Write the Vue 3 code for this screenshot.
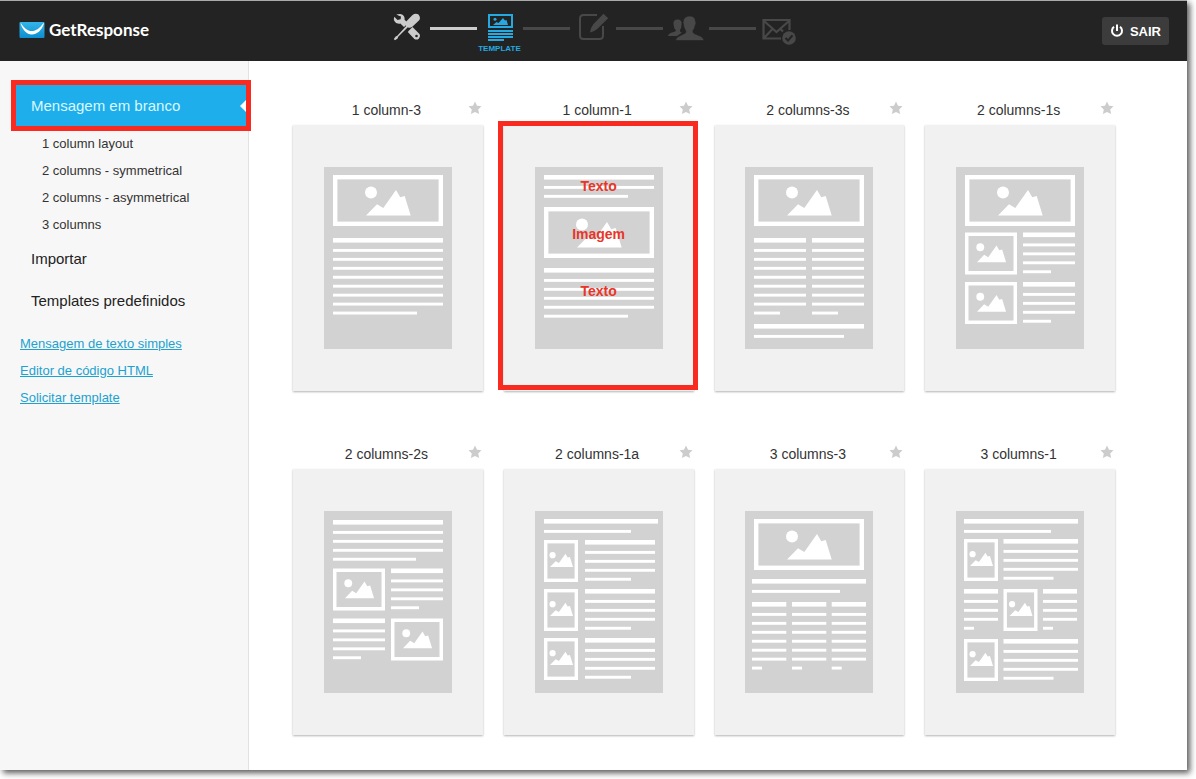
<script setup>
import { ref } from 'vue'

const img = (x, y, w, h, size) => ({ kind: 'image', x, y, w, h, size })
const text = (x, y, w, rows, last) => ({ kind: 'text', x, y, w, rows, last })

/* Drawings are laid out on a 128 x 182 sheet. */
const templates = [
  { name: '1 column-3', blocks: [img(9, 8, 110, 51, 'l'), text(9, 71, 110, 8, 84)] },
  {
    name: '1 column-1',
    marked: true,
    notes: ['Texto', 'Imagem', 'Texto'],
    blocks: [text(9, 8, 110, 2, 84), img(9, 40, 110, 51, 'l'), text(9, 101, 110, 5, 84)],
  },
  {
    name: '2 columns-3s',
    blocks: [img(9, 8, 110, 51, 'l'), text(9, 71, 52, 8, 26), text(67, 71, 52, 8, 26), text(9, 157, 110, 1, 90)],
  },
  {
    name: '2 columns-1s',
    blocks: [
      img(9, 8, 110, 51, 'l'),
      img(9, 65.5, 52, 42, 'm'), text(67, 65.5, 52, 4, 28),
      img(9, 115, 52, 42, 'm'), text(67, 115, 52, 4, 28),
    ],
  },
  {
    name: '2 columns-2s',
    blocks: [
      text(9, 9, 110, 4, 83),
      img(9, 57.5, 52, 42, 'm'), text(67, 57.5, 52, 4, 28),
      text(9, 107.5, 52, 4, 28), img(67, 107.5, 52, 42, 'm'),
    ],
  },
  {
    name: '2 columns-1a',
    blocks: [
      text(9, 8, 114, 1, 87),
      img(9, 29, 34, 42, 's'), text(50, 29, 70, 4, 46),
      img(9, 78, 34, 42, 's'), text(50, 78, 70, 4, 46),
      img(9, 127, 34, 42, 's'), text(50, 127, 70, 4, 46),
    ],
  },
  {
    name: '3 columns-3',
    blocks: [
      img(9, 8, 110, 51, 'l'), text(7, 68, 114, 1, 88),
      text(7, 91, 34.3, 7, 10), text(47, 91, 34.3, 7, 10), text(86.7, 91, 34.3, 7, 10),
    ],
  },
  {
    name: '3 columns-1',
    blocks: [
      text(8, 8, 114, 1, 87),
      img(8, 28, 34, 42, 's'), text(47.5, 28, 74.5, 4, 50),
      text(8, 78, 34, 4, 10), img(47.5, 78, 34, 42, 's'), text(87, 78, 34, 4, 10),
      img(8, 128, 34, 42, 's'), text(47.5, 128, 74.5, 4, 50),
    ],
  },
]

const scenes = {
  l: { x: 33, y: 40.5, scale: 1, border: 4.4 },
  m: { x: 12, y: 29.7, scale: 0.65, border: 3.5 },
  s: { x: 6, y: 27, scale: 0.515, border: 3.4 },
}
const scene = (b) => {
  const s = scenes[b.size]
  return `translate(${b.x + s.x} ${b.y + s.y}) scale(${s.scale})`
}
const border = (b) => scenes[b.size].border

const layouts = ['1 column layout', '2 columns - symmetrical', '2 columns - asymmetrical', '3 columns']
const tools = ['Mensagem de texto simples', 'Editor de código HTML', 'Solicitar template']
const favourites = ref([])
const toggle = (name) => {
  const i = favourites.value.indexOf(name)
  if (i < 0) favourites.value.push(name)
  else favourites.value.splice(i, 1)
}
</script>

<template>
  <div class="app">
    <header class="topbar">
      <a class="logo" href="#">
        <svg width="26" height="18" viewBox="0 0 26 18" aria-hidden="true">
          <defs>
            <linearGradient id="mail" x1="0" y1="0" x2="0" y2="1">
              <stop offset="0" stop-color="#35b5e9" />
              <stop offset="1" stop-color="#0c8ed0" />
            </linearGradient>
          </defs>
          <rect x=".5" y="1" width="25" height="16" rx="1" fill="url(#mail)" />
          <path d="M2 2.200C5 7 8.500 10 12.800 10S21 7 24.200 2.200L25 2.500C22.500 9.500 18 13.500 12.800 13.500S4 9.500 1.700 2.800Z" fill="#fff" />
        </svg>
        <span>GetResponse</span>
      </a>

      <ol class="steps">
        <li class="step done">
          <svg width="28" height="28" viewBox="0 0 28 28" fill="currentColor" aria-hidden="true">
            <path d="M3.300 1.600 7 1C10 1.200 12 3.500 11.600 6.800L15 10.200 11 14 7.300 10.500C4 11.400 1 9 .800 6L1.300 3.800 4.500 7 7.600 6.300 8 3.600 5.900 2.700Z" />
            <path d="M16 17.500 19.500 14 26.500 20.900Q28 23 26 25.400Q23.800 27.500 21.400 25.900L14.800 19Z" />
            <circle cx="23.500" cy="23" r="1.300" fill="#232323" />
            <path d="M19.500 2Q22.500 -.3 25.500 1.500Q28 4.500 26.200 7.200L19 14Q16.500 15.500 14.800 14.200L5.200 23.700 4.600 25.400 2 27.300.8 26.100 2.700 23.400 4.300 22.700 13.200 13Q11.800 11 13.200 8.500Z" />
          </svg>
        </li>
        <li class="line done"></li>
        <li class="step current">
          <svg width="28" height="28" viewBox="0 0 28 28" fill="currentColor" aria-hidden="true">
            <path fill-rule="evenodd" d="M2 1h25v14H2ZM4 3v10h21V3Z" />
            <circle cx="9" cy="6.300" r="1.500" />
            <path d="M7 12 10.500 9 12.500 10 17 5 19 7.500 20.500 7 22 12Z" />
            <path d="M2 17h25v2H2ZM2 20h25v2H2ZM2 23h25v2H2ZM2 26h16v2H2Z" />
          </svg>
          <span class="step-label">TEMPLATE</span>
        </li>
        <li class="line"></li>
        <li class="step">
          <svg width="32" height="28" viewBox="0 0 32 28" aria-hidden="true">
            <path d="M20 2H6.500Q3 2 3 5.500V22.500Q3 26 6.500 26H22.500Q26 26 26 22.500V13" fill="none" stroke="currentColor" stroke-width="2" />
            <path d="M26.500.800 31.200 5.300 20.500 15.700Q17.500 18.500 13 19.500Q13.500 14.500 16.500 11Z" fill="currentColor" />
          </svg>
        </li>
        <li class="line"></li>
        <li class="step">
          <svg width="36" height="28" viewBox="0 0 36 28" fill="currentColor" aria-hidden="true">
            <path d="M0 23Q.5 20.500 4 19.500Q8 18.500 8 17.500Q5.500 15 5.500 11Q5 6.500 9.500 6.500Q14.500 6.500 13.500 12Q13.500 15 12 17Q11.500 19 14 19.500L9 23Z" />
            <path d="M7.500 27.500Q8 24 12.500 22.500L17.500 20Q18.500 18.500 17 16.500Q15.500 14 15.500 11.500L15 9.500 15.700 6.500Q17 3 21.500 3Q27 3 27.300 7.500L28 10 27 13Q26.500 16 25 17.500Q24.500 19.500 26 20.500L32 23Q35.500 24.500 36 27.500Z" stroke="#232323" stroke-width=".6" />
          </svg>
        </li>
        <li class="line"></li>
        <li class="step">
          <svg width="34" height="32" viewBox="0 0 34 32" aria-hidden="true">
            <path d="M19 25.500H1.500V7H27.500V17M2 8 14.500 19 27 8M2 25 10.500 16M18.500 16 21 18.500" fill="none" stroke="currentColor" stroke-width="2.200" />
            <circle cx="27" cy="25" r="6.800" fill="currentColor" />
            <path d="M23.500 25 26 27.500 30.500 22.300" fill="none" stroke="#232323" stroke-width="2" />
          </svg>
        </li>
      </ol>

      <button class="exit" type="button">
        <svg width="14" height="14" viewBox="0 0 14 14" fill="none" stroke="currentColor" stroke-width="2" aria-hidden="true">
          <path d="M4 2.800A5 5 0 1 0 10 2.800M7 .5V7" />
        </svg>
        SAIR
      </button>
    </header>

    <div class="body">
      <aside class="sidebar">
        <nav aria-label="Templates">
          <a class="group active" href="#">Mensagem em branco</a>
          <ul class="layouts">
            <li v-for="l in layouts" :key="l"><a href="#">{{ l }}</a></li>
          </ul>
          <a class="group" href="#">Importar</a>
          <a class="group" href="#">Templates predefinidos</a>
        </nav>
        <ul class="tools">
          <li v-for="t in tools" :key="t"><a href="#">{{ t }}</a></li>
        </ul>
      </aside>

      <main class="gallery">
        <article v-for="t in templates" :key="t.name" class="template">
          <div class="head">
            <h2>{{ t.name }}</h2>
            <button
              class="star"
              type="button"
              :aria-label="'Favorito: ' + t.name"
              :aria-pressed="favourites.includes(t.name)"
              @click="toggle(t.name)"
            >
              <svg width="14" height="14" viewBox="0 0 14 14" aria-hidden="true">
                <path d="M7 .5 9 4.800 13.500 5.300 10.200 8.500 11.100 13 7 10.900 2.900 13 3.800 8.500.5 5.300 5 4.800Z" fill="currentColor" />
              </svg>
            </button>
          </div>
          <button class="card" :class="{ marked: t.marked }" type="button" :aria-label="t.name">
            <span class="sheet">
              <svg width="128" height="182" viewBox="0 0 128 182" fill="#fff" aria-hidden="true">
                <template v-for="(b, i) in t.blocks" :key="i">
                  <g v-if="b.kind === 'image'">
                    <rect :x="b.x" :y="b.y" :width="b.w" :height="b.h" />
                    <rect
                      :x="b.x + border(b)"
                      :y="b.y + border(b)"
                      :width="b.w - 2 * border(b)"
                      :height="b.h - 2 * border(b)"
                      fill="#d2d2d2"
                    />
                    <g :transform="scene(b)">
                      <circle cx="5" cy="-23" r="6" />
                      <path d="M0 0 11-11.300 17.300-7.600 30-25.600 34.300-18.300 38.700-19.600 44.700 0Z" />
                    </g>
                  </g>
                  <g v-else>
                    <rect :x="b.x" :y="b.y" :width="b.w" height="4.6" />
                    <rect
                      v-for="r in b.rows"
                      :key="r"
                      :x="b.x"
                      :y="b.y + 2 + r * 8.95"
                      :width="r === b.rows ? b.last : b.w"
                      height="2.9"
                    />
                  </g>
                </template>
              </svg>
              <span v-if="t.notes" class="notes">
                <span v-for="(n, i) in t.notes" :key="i">{{ n }}</span>
              </span>
            </span>
          </button>
        </article>
      </main>
    </div>
  </div>
</template>

<style>
body {
  margin: 0;
  background: #fff;
}
</style>

<style scoped>
.app {
  display: flex;
  flex-direction: column;
  box-sizing: border-box;
  min-height: calc(100vh - 9px);
  margin-right: 9px;
  margin-bottom: 9px;
  background: #fff;
  box-shadow: 3px 3px 6px rgba(0, 0, 0, 0.65);
  color: #333;
  font-family: "Liberation Sans", Arial, sans-serif;
}
a {
  color: inherit;
  text-decoration: none;
}
ul,
ol {
  list-style: none;
  margin: 0;
  padding: 0;
}
button {
  margin: 0;
  border: 0;
  font-family: inherit;
  cursor: pointer;
}
svg {
  display: block;
}

.topbar {
  display: grid;
  grid-template-columns: 1fr auto 1fr;
  align-items: center;
  box-sizing: border-box;
  height: 61px;
  padding: 0 18px;
  border-top: 1px solid #aaa;
  background: #232323;
}
.logo {
  display: flex;
  align-items: center;
  gap: 4px;
  padding: 0 0 2px 1px;
  color: #fff;
  font: 700 17px/20px Lato, sans-serif;
}
.steps {
  display: flex;
  align-self: start;
  padding: 12px 2px 0 0;
  color: #484848;
}
.step {
  display: flex;
  flex-direction: column;
  align-items: center;
  width: 46px;
}
.line {
  width: 47px;
  height: 3px;
  margin-top: 14px;
  background: #484848;
}
.step.done {
  color: #ccc;
}
.line.done {
  background: #ccc;
}
.step.current {
  color: #25a9e0;
}
.step-label {
  margin-top: 3px;
  font-size: 8px;
  font-weight: 700;
  line-height: 10px;
}
.exit {
  display: flex;
  align-items: center;
  justify-self: end;
  gap: 6px;
  height: 28px;
  padding: 0 8px;
  border-radius: 3px;
  background: #3c3c3c;
  color: #fff;
  font-size: 13px;
  font-weight: 700;
}

.body {
  display: flex;
  flex: 1;
}
.sidebar {
  flex: 0 0 248px;
  padding-top: 24px;
  border-right: 1px solid #e2e2e2;
  background: #f7f7f7;
}
.group {
  display: block;
  padding-left: 31px;
  color: #222;
  font-size: 15px;
  line-height: 42px;
}
.group.active {
  position: relative;
  margin-left: 16px;
  padding-left: 15px;
  background: #1eaeec;
  color: #d9f8ff;
  line-height: 41px;
}
.group.active::before {
  content: "";
  position: absolute;
  top: 15px;
  right: 2px;
  border: 6px solid transparent;
  border-left-width: 0;
  border-right-color: #fff;
}
.group.active::after {
  content: "";
  position: absolute;
  inset: -5px -3px -5px -5px;
  border: 5px solid #f92b20;
}
.layouts {
  padding: 4px 0 0 42px;
  font-size: 13px;
  line-height: 27px;
}
.tools {
  padding: 8px 0 0 20px;
  color: #1ca2cf;
  font-size: 13px;
  line-height: 27px;
}
.tools a {
  text-decoration: underline;
}

.gallery {
  flex: 1;
  display: grid;
  grid-template-columns: repeat(4, 1fr);
  align-content: start;
  gap: 51px 21px;
  padding: 37px 72px 34px 44px;
}
.head {
  display: grid;
  grid-template-columns: 12px 1fr 15px;
  align-items: start;
  height: 27px;
}
h2 {
  grid-column: 2;
  margin: 0;
  padding-top: 2px;
  font-size: 14px;
  font-weight: 400;
  line-height: 20px;
  text-align: center;
}
.star {
  padding: 3px 0 0;
  background: none;
  color: #ccc;
}
.star[aria-pressed="true"] {
  color: #1eaeec;
}
.card {
  position: relative;
  display: flex;
  justify-content: center;
  width: 100%;
  padding: 42px 0;
  background: #f1f1f1;
  box-shadow: 0 1px 2px rgba(0, 0, 0, 0.3);
}
.card.marked::after {
  content: "";
  position: absolute;
  inset: -4px -4px 1px -6px;
  border: 5px solid #f92b20;
}
.sheet {
  position: relative;
  background: #d2d2d2;
}
.notes {
  position: absolute;
  inset: 9px 0 39px;
  display: grid;
  grid-template-rows: 20px 76px 1fr;
  align-items: center;
  color: #e93529;
  font-size: 14px;
  font-weight: 700;
  line-height: 18px;
  text-align: center;
}
</style>
